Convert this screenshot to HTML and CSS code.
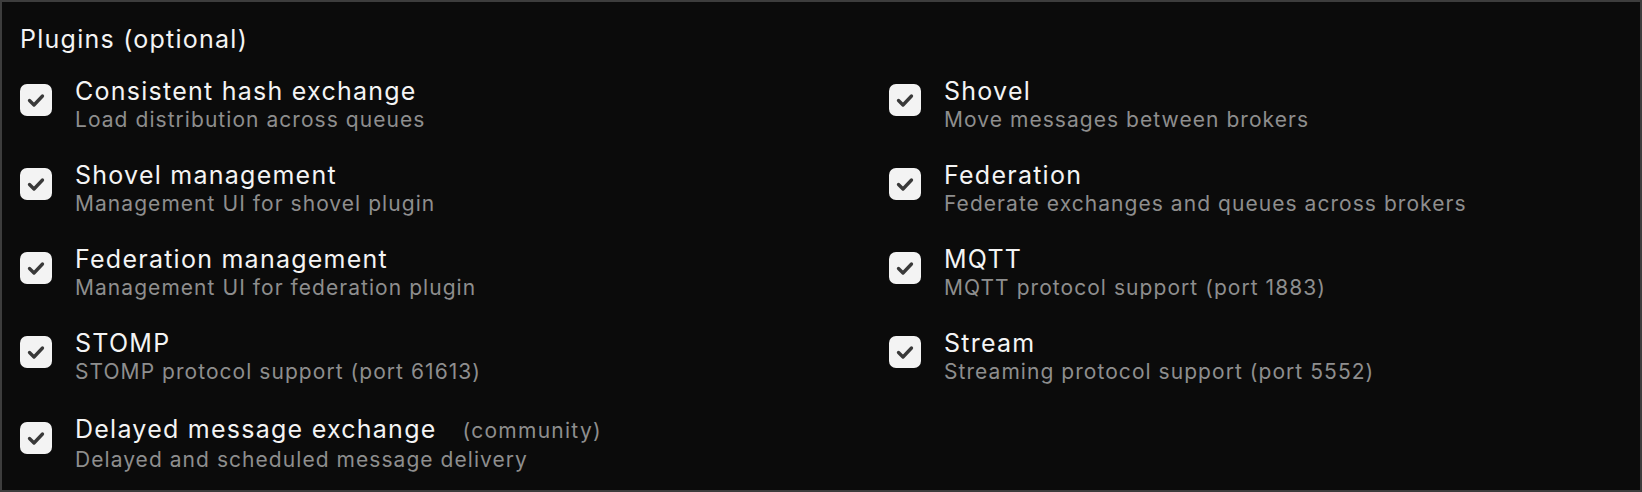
FILE: index.html
```html
<!DOCTYPE html>
<html lang="en">
<head>
<meta charset="utf-8">
<title>Plugins</title>
<link rel="stylesheet" href="styles.css">
</head>
<body>
<section class="panel">
  <h2 class="heading">Plugins (optional)</h2>
  <div class="grid">
    <label class="item">
      <span class="box"><svg viewBox="0 0 32 32"><path d="M9.5 16.5l4.5 4.5 8.5-9"/></svg></span>
      <span class="text"><span class="title">Consistent hash exchange</span><span class="desc">Load distribution across queues</span></span>
    </label>
    <label class="item">
      <span class="box"><svg viewBox="0 0 32 32"><path d="M9.5 16.5l4.5 4.5 8.5-9"/></svg></span>
      <span class="text"><span class="title">Shovel</span><span class="desc">Move messages between brokers</span></span>
    </label>
    <label class="item">
      <span class="box"><svg viewBox="0 0 32 32"><path d="M9.5 16.5l4.5 4.5 8.5-9"/></svg></span>
      <span class="text"><span class="title">Shovel management</span><span class="desc">Management UI for shovel plugin</span></span>
    </label>
    <label class="item">
      <span class="box"><svg viewBox="0 0 32 32"><path d="M9.5 16.5l4.5 4.5 8.5-9"/></svg></span>
      <span class="text"><span class="title">Federation</span><span class="desc">Federate exchanges and queues across brokers</span></span>
    </label>
    <label class="item">
      <span class="box"><svg viewBox="0 0 32 32"><path d="M9.5 16.5l4.5 4.5 8.5-9"/></svg></span>
      <span class="text"><span class="title">Federation management</span><span class="desc">Management UI for federation plugin</span></span>
    </label>
    <label class="item">
      <span class="box"><svg viewBox="0 0 32 32"><path d="M9.5 16.5l4.5 4.5 8.5-9"/></svg></span>
      <span class="text"><span class="title">MQTT</span><span class="desc">MQTT protocol support (port 1883)</span></span>
    </label>
    <label class="item">
      <span class="box"><svg viewBox="0 0 32 32"><path d="M9.5 16.5l4.5 4.5 8.5-9"/></svg></span>
      <span class="text"><span class="title">STOMP</span><span class="desc">STOMP protocol support (port 61613)</span></span>
    </label>
    <label class="item">
      <span class="box"><svg viewBox="0 0 32 32"><path d="M9.5 16.5l4.5 4.5 8.5-9"/></svg></span>
      <span class="text"><span class="title">Stream</span><span class="desc">Streaming protocol support (port 5552)</span></span>
    </label>
    <label class="item item-last">
      <span class="box"><svg viewBox="0 0 32 32"><path d="M9.5 16.5l4.5 4.5 8.5-9"/></svg></span>
      <span class="text"><span class="title">Delayed message exchange<span class="tag">(community)</span></span><span class="desc">Delayed and scheduled message delivery</span></span>
    </label>
  </div>
</section>
</body>
</html>
```

FILE: styles.css
```css
* { box-sizing: border-box; }
html, body {
  margin: 0;
  padding: 0;
  background: #0b0b0b;
}
body {
  font-family: Inter, "Noto Sans", "Liberation Sans", sans-serif;
  color: #f4f4f4;
}
.panel {
  width: 1642px;
  height: 492px;
  border: 2px solid #3d3d3d;
  background: #0b0b0b;
  padding: 21px 18px 0 18px;
}
.heading {
  margin: 0;
  font-size: 25px;
  font-weight: 400;
  line-height: 32px;
  letter-spacing: 0.05em;
  color: #f4f4f4;
}
.grid {
  margin-top: 20px;
  display: grid;
  grid-template-columns: 1fr 1fr;
  column-gap: 136px;
  row-gap: 26px;
}
.item {
  display: flex;
  align-items: flex-start;
  gap: 23px;
}
.item-last {
  margin-top: 2px;
}
.box {
  flex: none;
  width: 32px;
  height: 32px;
  margin-top: 9px;
  border-radius: 7px;
  background: #f3f3f3;
  display: flex;
}
.box svg {
  width: 32px;
  height: 32px;
  fill: none;
  stroke: #393939;
  stroke-width: 3.3;
  stroke-linecap: round;
  stroke-linejoin: round;
}
.text {
  display: flex;
  flex-direction: column;
}
.title {
  font-size: 25px;
  line-height: 32px;
  letter-spacing: 0.05em;
  color: #f4f4f4;
}
.desc {
  font-size: 21px;
  line-height: 26px;
  letter-spacing: 0.05em;
  color: #8e8e8e;
}
.tag {
  margin-left: 26px;
  font-size: 21px;
  letter-spacing: 0.06em;
  color: #8e8e8e;
}
```
